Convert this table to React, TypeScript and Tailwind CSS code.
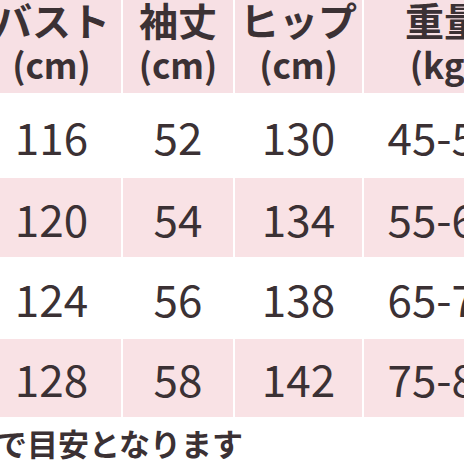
const rows = [
  { cells: ["116", "52", "130", "45-55"], pink: false, h: "h-[85px]" },
  { cells: ["120", "54", "134", "55-65"], pink: true, h: "h-[79px]" },
  { cells: ["124", "56", "138", "65-75"], pink: false, h: "h-[82px]" },
  { cells: ["128", "58", "142", "75-85"], pink: true, h: "h-[78px]" },
]

const headers = [
  { title: "バスト", unit: "(cm)" },
  { title: "袖丈", unit: "(cm)" },
  { title: "ヒップ", unit: "(cm)" },
  { title: "重量", unit: "(kg)" },
]

const font = { fontFamily: '"Noto Sans CJK JP", "Noto Sans", sans-serif' }

export default function App() {
  return (
    <div className="w-[464px] h-[464px] overflow-hidden bg-white text-[#3b3134]" style={font}>
      <div className="ml-[-18px] w-[538px]">
        <div className="grid grid-cols-[139px_110px_127px_160px] gap-x-[2px] h-[93px]">
          {headers.map((h) => (
            <div
              key={h.title}
              className="bg-[#f7e0e4] flex flex-col items-center justify-end pb-[7px] overflow-hidden"
            >
              <div className="text-[39px] leading-[46px] font-semibold whitespace-nowrap">{h.title}</div>
              <div className="text-[35px] leading-[44px] font-semibold whitespace-nowrap">{h.unit}</div>
            </div>
          ))}
        </div>
        {rows.map((r, i) => (
          <div key={i} className={`grid grid-cols-[139px_110px_127px_160px] gap-x-[2px] ${r.h}`}>
            {r.cells.map((c, j) => (
              <div
                key={j}
                className={`flex items-center justify-center text-[44px] leading-none ${r.pink ? "bg-[#f9e2e5]" : "bg-white"}`}
              >
                {c}
              </div>
            ))}
          </div>
        ))}
      </div>
      <div className="ml-[-4px] mt-[6px] text-[31px] leading-[40px] font-semibold whitespace-nowrap">
        で目安となります
      </div>
    </div>
  )
}
